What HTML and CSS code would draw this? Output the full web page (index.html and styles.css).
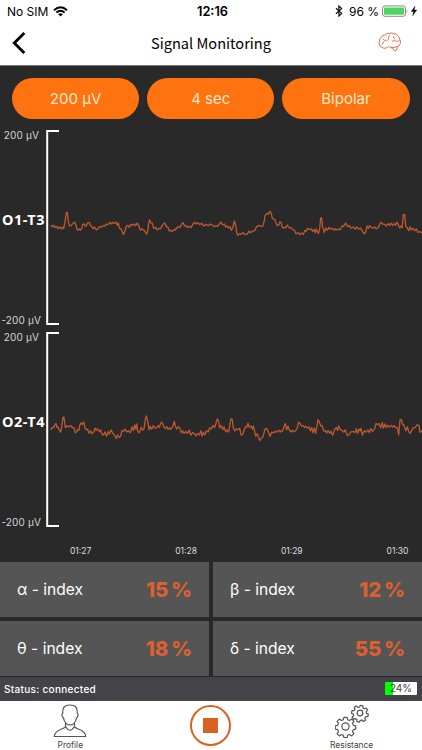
FILE: index.html
```html
<!DOCTYPE html>
<html lang="en">
<head>
<meta charset="UTF-8" />
<meta name="viewport" content="width=device-width, initial-scale=1" />
<title>Signal Monitoring</title>
<link rel="stylesheet" href="styles.css">
</head>
<body>
  <!-- Phone status bar -->
  <div class="phone-bar">
    <div class="carrier">
      <span>No SIM</span>
      <svg width="15" height="11" viewBox="0 0 15 11" fill="none" stroke="#000" stroke-width="2">
        <path d="M1 4.2Q7.500-1.600 14 4.200M3.400 6.600Q7.500 3 11.600 6.600" />
        <path d="M5.200 8.200Q7.500 6.200 9.800 8.200L7.500 10.600Z" fill="#000" stroke="none" />
      </svg>
    </div>
    <strong class="clock">12:16</strong>
    <div class="battery">
      <svg width="8" height="12" viewBox="0 0 8 12" fill="none" stroke="#111" stroke-width="1.200"><path d="M1 3.200 6.600 8.400 3.900 11V1L6.600 3.600 1 8.800" /></svg>
      <span class="battery-text">96 %</span>
      <svg width="36" height="12" viewBox="0 0 36 12">
        <rect x=".5" y=".9" width="23" height="10.400" rx="2.500" fill="#fff" stroke="#888" />
        <rect x="2" y="2.400" width="20" height="7.400" rx="1.200" fill="#4cd55f" />
        <path d="M24.800 4.300v3.600q1.500-1.800 0-3.600" fill="#888" />
        <path d="M33 1.200 29.300 6.500h2.400l-1 4.200 4-5.600h-2.500z" fill="#000" stroke="#000" stroke-width=".4" />
      </svg>
    </div>
  </div>

  <header class="nav">
    <button class="back" aria-label="Back">
      <svg width="14" height="22" viewBox="0 0 14 22" fill="none" stroke="#000" stroke-width="2.800"><path d="M12.300 1 2.300 11l10 10" /></svg>
    </button>
    <h1>Signal Monitoring</h1>
    <svg class="brain" width="24" height="21" viewBox="0 0 24 21" fill="none" stroke="#e2714f" stroke-width="1" stroke-linejoin="round">
      <path d="M8 16q-2.500 1-4-.8-2.500-.2-2.300-2.200Q.2 11 1.500 9 1 6.500 3.400 5.300 4 2.800 7 3 8.500.9 11.500 1.500 14 .2 16 1.800q3-.2 3.800 2.300 2.200 1 1.900 3.200 1.600 2 .6 4-.2 2.500-2.700 3-.3 2.500-2 5l-4.800-4q-1.500.2-2.500-.8-1 1.300-2.300 1.500z" />
      <path d="M3.500 12q2.200-.2 2.200-2.500M8 8.300q-2.500.5-3-1.200M12 3.300q-1.800.7-1.500 3 .2 2-2 2.500M15.800 4.300q-.8 2 1.200 3M14 9.300q2.500-1.600 4.500 0M18.500 9.300q2 .2 3.300-.8M12.800 15.300q3.500 1 6.700-1" />
    </svg>
  </header>

  <main>
    <div class="options">
      <button>200 μV</button>
      <button>4 sec</button>
      <button>Bipolar</button>
    </div>

    <!-- Signals -->
    <section class="channel">
      <div class="scale">
        <span class="top">200 μV</span>
        <strong>O1-T3</strong>
        <span class="bottom">-200 μV</span>
      </div>
      <svg class="plot" width="376" height="196" viewBox="0 0 376 196">
        <path class="bracket" d="M13 1H1.200V194H13" />
        <g transform="translate(-6 70) scale(.33333)">
          <polyline class="trace" points="32,76 37,80 41,76 45,82 50,79 54,86 59,81 64,87 68,81 71,86 75,66 79,37 82,37 85,66 89,78 94,76 99,70 104,66 108,76 112,90 117,87 121,91 126,84 128,73 132,72 137,79 140,75 143,68 148,67 151,77 155,78 159,86 164,81 169,90 174,86 178,80 183,82 189,77 194,79 199,72 204,74 209,67 214,72 218,67 223,70 228,66 232,76 235,69 239,86 243,86 247,97 251,103 255,93 259,78 264,77 268,82 272,73 278,76 283,72 287,77 292,69 297,79 301,90 306,86 310,89 315,94 319,103 323,94 326,70 329,59 332,68 337,70 341,85 347,82 351,90 357,85 362,86 367,76 371,71 374,69 379,79 384,82 388,93 393,91 397,95 402,88 406,90 411,83 416,80 420,82 425,72 429,68 434,78 439,77 443,83 448,79 453,83 458,74 463,67 468,72 474,68 479,74 485,70 491,78 498,73 506,77 511,72 517,75 522,80 528,77 533,79 538,72 543,66 548,75 553,72 557,81 561,78 566,84 570,80 574,91 578,85 583,63 587,75 590,99 594,106 599,101 604,103 609,97 613,103 622,103 627,93 632,98 638,93 644,92 650,80 657,76 663,79 668,79 673,62 675,47 681,40 685,43 689,34 693,37 697,55 704,58 708,69 712,77 717,74 720,65 724,69 727,82 731,85 735,81 738,83 742,75 748,84 753,83 758,89 763,90 768,101 774,98 779,104 784,99 790,103 795,91 799,94 803,85 808,88 814,87 818,94 822,88 826,98 829,87 835,101 839,86 842,54 845,54 848,82 853,98 857,84 862,91 867,82 872,87 878,85 883,91 887,86 892,90 897,86 901,89 906,78 911,79 917,69 923,80 928,77 933,84 940,81 945,87 950,81 956,88 961,84 966,91 972,102 977,96 981,78 985,85 989,77 994,83 999,84 1004,81 1009,86 1014,84 1018,75 1023,67 1028,72 1034,73 1039,78 1044,71 1049,76 1053,69 1058,77 1062,71 1067,76 1070,67 1074,71 1079,84 1082,78 1086,84 1090,44 1094,43 1097,79 1101,82 1106,92 1110,80 1114,90 1119,85 1124,92 1129,87 1134,97 1139,95 1146,99" />
        </g>
      </svg>
    </section>

    <section class="channel">
      <div class="scale">
        <span class="top">200 μV</span>
        <strong>O2-T4</strong>
        <span class="bottom">-200 μV</span>
      </div>
      <svg class="plot" width="376" height="196" viewBox="0 0 376 196">
        <path class="bracket" d="M13 1H1.200V194H13" />
        <g transform="translate(-6 73.500) scale(.33333)">
          <polyline class="trace" points="32,73 37,66 41,66 45,57 48,54 51,66 54,64 58,74 62,80 65,64 69,35 72,36 76,66 81,61 86,64 92,60 97,66 102,67 106,82 111,78 113,72 117,74 119,60 123,52 127,57 131,49 135,67 139,73 143,71 147,83 152,76 156,85 162,79 165,68 169,74 173,70 178,78 182,73 186,87 191,88 195,79 200,92 205,78 209,86 213,73 219,84 223,89 229,99 233,88 237,96 242,92 246,75 251,77 255,71 260,79 266,76 271,82 276,64 280,75 284,58 287,71 290,55 293,77 298,82 304,65 308,74 312,70 316,42 319,31 323,46 327,73 331,62 335,71 340,60 345,68 350,67 354,60 358,66 362,53 366,50 371,64 376,69 380,63 384,72 389,67 393,71 398,64 403,48 406,60 410,71 415,64 419,67 424,82 428,76 432,84 438,78 443,84 448,74 453,89 458,81 464,85 468,91 472,84 478,88 483,76 486,92 490,81 495,88 499,76 505,79 509,67 514,70 519,60 524,66 529,50 532,40 536,48 539,67 543,60 549,72 552,64 557,79 561,73 566,80 570,55 573,40 577,43 580,68 585,76 589,70 593,73 599,68 603,88 608,87 612,75 617,63 621,65 624,53 628,65 634,62 638,71 640,62 644,76 647,92 651,85 655,94 659,105 664,98 669,94 675,70 680,69 685,79 690,93 695,80 701,82 706,77 711,80 716,74 721,80 724,75 728,77 733,60 736,54 740,73 744,62 749,75 753,80 757,74 762,79 768,74 772,66 776,50 780,53 784,62 789,60 793,66 797,62 802,68 807,64 811,76 815,66 819,81 823,67 827,84 831,61 834,42 838,50 843,62 846,60 852,77 856,75 860,82 864,75 869,83 873,77 878,89 884,72 889,66 893,75 896,61 901,73 906,74 911,80 916,73 922,91 928,86 933,79 939,78 945,81 949,70 953,84 957,70 961,76 963,69 967,89 973,76 979,80 984,73 988,82 993,69 998,78 1004,69 1008,54 1013,58 1017,54 1022,67 1027,51 1030,68 1035,55 1038,66 1043,59 1047,65 1053,60 1058,65 1062,60 1067,66 1072,67 1076,88 1080,43 1084,42 1088,57 1092,59 1097,76 1102,64 1106,78 1110,84 1116,73 1120,67 1126,66 1131,58 1137,59 1140,80 1146,76" />
        </g>
      </svg>
    </section>

    <div class="times">
      <span>01:27</span><span>01:28</span><span>01:29</span><span>01:30</span>
    </div>

    <!-- Rhythm indexes -->
    <section class="indexes">
      <div class="index"><span>α - index</span><strong>15 %</strong></div>
      <div class="index"><span>β - index</span><strong>12 %</strong></div>
      <div class="index"><span>θ - index</span><strong>18 %</strong></div>
      <div class="index"><span>δ - index</span><strong>55 %</strong></div>
    </section>
  </main>

  <div class="device-status">
    <span>Status: connected</span>
    <span class="charge">24%</span>
  </div>

  <nav class="tabs">
    <a class="tab">
      <svg width="34" height="34" viewBox="0 0 34 34" fill="none" stroke="#555" stroke-width="1.200" stroke-linejoin="round">
        <path d="M12.500 18.500v4.300c-1 2.800-11 2-11.200 9.700h31.400c-.3-7.700-10.200-6.900-11.200-9.700v-4.300" />
        <path d="M9.700 9.500C9.300 3.500 11.500 1 17 1s7.700 2.500 7.300 8.500c1.300.2.700 4-.8 4.300-.7 4.300-3.500 7.200-6.500 7.200s-5.800-2.900-6.500-7.200c-1.500-.3-2.100-4.100-.8-4.300z" />
        <path d="M12.500 22.500q4.500 7.500 9 0" />
      </svg>
      <span>Profile</span>
    </a>
    <button class="stop" aria-label="Stop">
      <svg width="15" height="15" viewBox="0 0 15 15"><rect width="15" height="15" fill="#da621f" /></svg>
    </button>
    <a class="tab">
      <svg width="34" height="34" viewBox="0 0 34 34" fill="none" stroke="#555" stroke-width="1.200" stroke-linejoin="round">
        <defs>
          <path id="gear" d="M-1.600-9.700h3.200l.5 2.400 2 .8 2.100-1.400 2.200 2.200-1.400 2.100.8 2 2.400.5v3.200l-2.400.5-.8 2 1.400 2.100-2.200 2.200-2.100-1.400-2 .8-.5 2.400h-3.200l-.5-2.400-2-.8-2.100 1.400-2.200-2.200 1.400-2.100-.8-2-2.400-.5v-3.200l2.400-.5.8-2-1.400-2.100 2.200-2.200 2.100 1.400 2-.8z" vector-effect="non-scaling-stroke" />
        </defs>
        <use href="#gear" transform="translate(10.500 23)" />
        <circle cx="10.500" cy="22.500" r="3.600" />
        <use href="#gear" transform="translate(25 9.300) rotate(12) scale(.82)" />
        <circle cx="25" cy="9" r="2.800" />
      </svg>
      <span>Resistance</span>
    </a>
  </nav>
</body>
</html>
```
FILE: styles.css
```css
* {
  box-sizing: border-box;
}

body {
  margin: 0;
  width: 422px;
  height: 750px;
  overflow: hidden;
  display: flex;
  flex-direction: column;
  background: #fff;
  color: #000;
  font-family: Inter, "Liberation Sans", sans-serif;
}

button {
  border: none;
  padding: 0;
  background: none;
  font-family: inherit;
}

svg {
  display: block;
  flex: none;
}

/* Phone status bar */
.phone-bar {
  height: 22px;
  padding: 0 4px 0 7px;
  display: grid;
  grid-template-columns: 1fr auto 1fr;
  align-items: center;
  font-size: 12px;
}

.carrier, .battery {
  display: flex;
  align-items: center;
  gap: 5px;
}

.battery {
  justify-content: flex-end;
  gap: 3px;
}

.battery svg:first-child {
  margin-right: 3px;
}

.clock {
  font-size: 12.8px;
  font-weight: 600;
}

/* Navigation */
.nav {
  height: 44px;
  padding: 0 20px 2px 12px;
  border-bottom: 1px solid #777;
  display: grid;
  grid-template-columns: 24px 1fr 24px;
  align-items: center;
}

.nav h1 {
  margin: 0;
  padding-left: 8px;
  font-family: "Noto Sans CJK SC", "Noto Sans", sans-serif;
  font-size: 14.6px;
  font-weight: 400;
  line-height: 22px;
  text-align: center;
}

/* Dark area */
main {
  height: 610.5px;
  flex: none;
  background: #292929;
}

.options {
  display: flex;
  gap: 8px;
  padding: 12px 12.5px 11.5px 12px;
}

.options button {
  flex: 1;
  height: 40.5px;
  border-radius: 21px;
  background: #ff7210;
  color: #ffe9c9;
  font-size: 15px;
}

.channel {
  display: flex;
  height: 196px;
  margin-bottom: 5.5px;
}

.scale {
  width: 46px;
  padding-right: 5px;
  display: flex;
  flex-direction: column;
  justify-content: space-between;
  align-items: flex-end;
  color: #d4d4d4;
  font-size: 10px;
  letter-spacing: .15px;
  line-height: 10px;
  white-space: nowrap;
}

.scale .top {
  padding-right: 2px;
}

.scale .bottom {
  padding-bottom: 1px;
}

.scale strong {
  margin: 0 -4px 17px 0;
  color: #fff;
  font-family: "Noto Sans", sans-serif;
  font-size: 14.5px;
  letter-spacing: .5px;
}

.bracket {
  fill: none;
  stroke: #fff;
  stroke-width: 2;
}

.trace {
  fill: none;
  stroke: #bd5730;
  stroke-width: 4;
  stroke-linejoin: round;
}

.times {
  display: flex;
  justify-content: space-between;
  height: 29px;
  padding: 12.5px 13.5px 0 70px;
  color: #ddd;
  font-size: 8.5px;
  line-height: 11px;
}

.indexes {
  display: grid;
  grid-template-columns: 1fr 1fr;
  grid-auto-rows: 55px;
  gap: 4px;
}

.index {
  display: flex;
  align-items: center;
  justify-content: space-between;
  padding: 0 17px;
  background: #555;
  color: #fff;
  font-size: 15.6px;
}

.index strong {
  color: #dc6030;
  font-size: 20.5px;
  font-weight: 800;
  word-spacing: -2px;
}

/* Device status */
.device-status {
  height: 24.5px;
  flex: none;
  display: flex;
  align-items: center;
  justify-content: space-between;
  padding: 0 5px 0 4px;
  background: #444448;
  color: #fff;
  font-size: 10px;
  font-weight: 500;
  letter-spacing: .3px;
}

.charge {
  width: 32px;
  height: 13px;
  border-radius: 1px;
  background: linear-gradient(to right, #0f0 24%, #fff 24%);
  color: #444;
  font-weight: 400;
  letter-spacing: 0;
  line-height: 13px;
  text-align: center;
}

/* Bottom tabs */
.tabs {
  flex: 1;
  display: grid;
  grid-template-columns: repeat(3, 1fr);
  justify-items: center;
}

.tab {
  display: flex;
  flex-direction: column;
  align-items: center;
  gap: 2px;
  padding-top: 3px;
  color: #444;
  font-size: 8.4px;
  line-height: 10px;
}

.stop {
  width: 41px;
  height: 41px;
  margin-top: 4px;
  display: flex;
  align-items: center;
  justify-content: center;
  border: 2px solid #da621f;
  border-radius: 50%;
}
```
